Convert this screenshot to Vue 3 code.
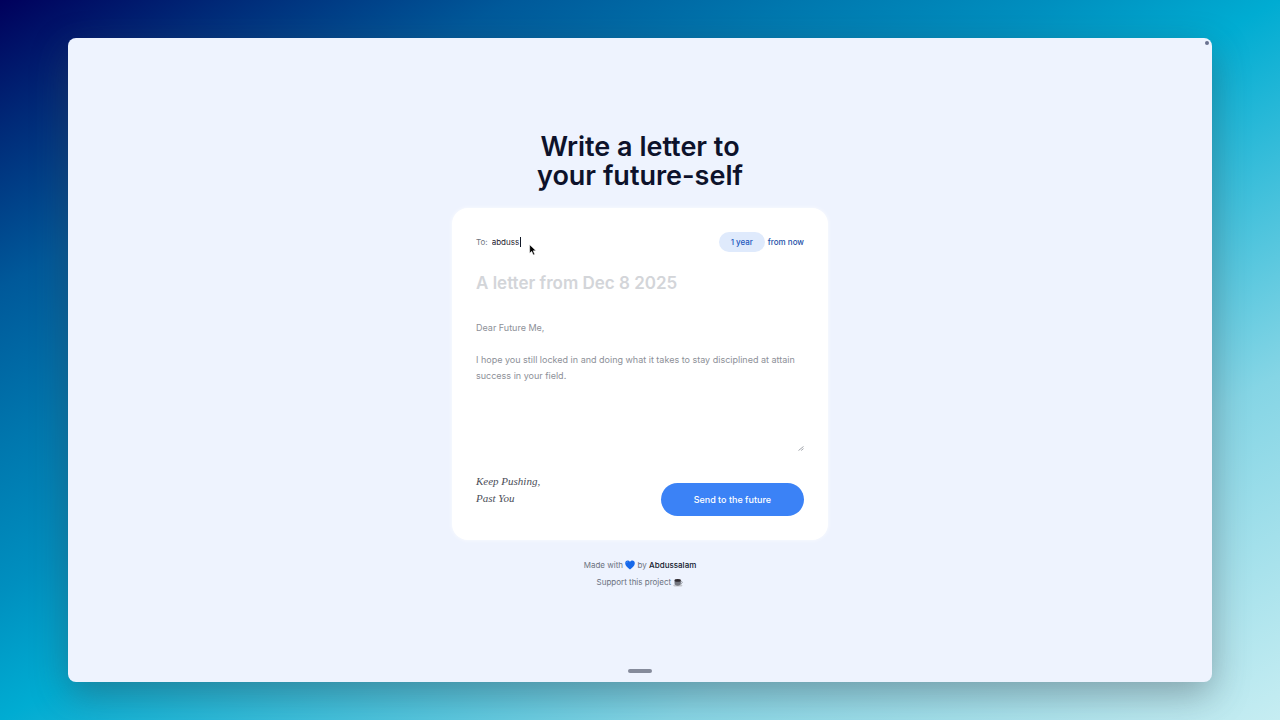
<script setup>
import { ref } from 'vue'

const periods = ['6 months', '1 year', '3 years', '5 years']

const to = ref('abduss')
const period = ref('1 year')
const title = ref('')
const message = ref('')
const sent = ref(false)

const hint = `Dear Future Me,

I hope you still locked in and doing what it takes to stay disciplined at attain success in your field.`

function send() {
  if (!to.value.trim()) return
  sent.value = true
}
</script>

<template>
  <div class="desktop">
    <div class="window">
      <span class="dot"></span>

      <main class="page">
        <h1 class="heading">Write a letter to<br />your future-self</h1>

        <form class="card" @submit.prevent="send">
          <div class="top-row">
            <div class="to-field">
              <label for="to">To:</label>
              <div class="to-box">
                <input id="to" v-model="to" type="text" class="to-input" autocomplete="off" spellcheck="false" />
                <span class="caret"></span>
                <svg class="pointer" viewBox="0 0 12 18" aria-hidden="true">
                  <path d="M1 1v13l3-3 2.400 5.400 2.200-1L6.300 10.200H10.500z" fill="#000" stroke="#fff" stroke-width="0.8" />
                </svg>
              </div>
            </div>
            <div class="when">
              <select id="period" v-model="period" class="period">
                <option v-for="p in periods" :key="p" :value="p">{{ p }}</option>
              </select>
              <label for="period">from now</label>
            </div>
          </div>

          <input
            v-model="title"
            type="text"
            class="title-input"
            placeholder="A letter from Dec 8 2025"
            aria-label="Title"
          />

          <div class="message-box">
            <textarea v-model="message" class="message" :placeholder="hint" aria-label="Message"></textarea>
            <svg class="grip" viewBox="0 0 6 6" aria-hidden="true">
              <path d="M0.500 5.500L5.500 1.500M3.200 5.500L5.500 3.600" stroke="#8b8f98" stroke-width="0.8" />
            </svg>
          </div>

          <div class="bottom-row">
            <p class="signature">Keep Pushing,<br />Past You</p>
            <button type="submit" class="send" :disabled="sent">Send to the future</button>
          </div>
        </form>

        <footer class="footer">
          <p>
            Made with
            <svg class="heart" viewBox="0 0 10 10" role="img" aria-label="love">
              <path d="M5 9.600C2.400 7.400 0.200 5.600 0.200 3.200 0.200 1.600 1.300 0.600 2.700 0.600 3.700 0.600 4.600 1.200 5 2 5.400 1.200 6.300 0.600 7.300 0.600 8.700 0.600 9.800 1.600 9.800 3.200 9.800 5.600 7.600 7.400 5 9.600z" fill="#1668ea" />
              <path d="M1.600 3.100C1.600 2.200 2.200 1.700 3 1.800" fill="none" stroke="#4d9bff" stroke-width="0.8" />
            </svg>
            by <a href="#" class="author">Abdussalam</a>
          </p>
          <a href="#" class="support">
            Support this project
            <svg class="cup" viewBox="0 0 10 9" aria-hidden="true">
              <ellipse cx="4.800" cy="7.400" rx="4.600" ry="1.200" fill="#c3c6cc" />
              <path d="M1.500 2.500h6.400v2.600c0 1.700-1.300 2.700-3.200 2.700S1.500 6.800 1.500 5.100z" fill="#747780" />
              <path d="M7.900 3.300c1.800-.2 1.800 2.500-.4 2.500" fill="none" stroke="#8b8e96" stroke-width="0.9" />
              <ellipse cx="4.700" cy="2.400" rx="3.200" ry="1.300" fill="#302b30" />
            </svg>
          </a>
        </footer>
      </main>

      <span class="home-bar"></span>
    </div>
  </div>
</template>

<style>
body {
  margin: 0;
}
</style>

<style scoped>
.desktop {
  box-sizing: border-box;
  display: flex;
  min-height: 100vh;
  padding: 38px 68px;
  font-family: Inter, 'Liberation Sans', sans-serif;
  background: linear-gradient(
    to bottom right,
    #00005c 0%,
    #002a78 9%,
    #00599a 20%,
    #0077ae 31%,
    #008fbf 41%,
    #00acd2 50%,
    #85d5e5 76%,
    #c6edf2 100%
  );
}

.window {
  position: relative;
  flex: 1;
  display: flex;
  justify-content: center;
  align-items: center;
  border-radius: 8px;
  background: #eef3fe;
  box-shadow: 0 12px 36px rgba(60, 60, 70, 0.4);
}

.dot {
  position: absolute;
  top: 3px;
  right: 3px;
  width: 4px;
  height: 4px;
  border-radius: 50%;
  background: #69728f;
}

.home-bar {
  position: absolute;
  bottom: 9px;
  width: 24px;
  height: 4px;
  border-radius: 2px;
  background: #858b9b;
}

.page {
  display: flex;
  flex-direction: column;
  align-items: center;
  width: 100%;
  padding-top: 2px;
}

.heading {
  margin: 0 0 18px;
  text-align: center;
  font-size: 27px;
  line-height: 29px;
  font-weight: 600;
  color: #0d122b;
}

.card {
  box-sizing: border-box;
  width: 100%;
  max-width: 376px;
  padding: 24px;
  border-radius: 16px;
  background: #fff;
  box-shadow: 0 0 4px rgba(255, 255, 255, 0.8);
}

input,
textarea,
select,
button {
  box-sizing: border-box;
  margin: 0;
  padding: 0;
  border: none;
  outline: none;
  background: transparent;
  font-family: inherit;
}

/* Recipient and delivery date */
.top-row {
  display: flex;
  justify-content: space-between;
  align-items: center;
  font-size: 8px;
}

.to-field {
  flex: 1;
  display: flex;
  align-items: center;
  gap: 4px;
  color: #70757f;
}

.to-box {
  position: relative;
  flex: 1;
}

.to-input {
  display: block;
  width: 100%;
  height: 20px;
  font-size: 8px;
  color: #1f2430;
}

.caret {
  position: absolute;
  top: 5px;
  left: 28px;
  width: 1px;
  height: 10px;
  background: #111827;
}

.pointer {
  position: absolute;
  top: 12px;
  left: 37px;
  width: 8px;
  height: 12px;
}

.when {
  display: flex;
  align-items: center;
  gap: 3px;
  font-weight: 500;
  color: #2450a8;
}

.period {
  appearance: none;
  width: 46px;
  height: 20px;
  border-radius: 10px;
  background: #dfeafc;
  text-align: center;
  text-align-last: center;
  font-size: 8px;
  font-weight: 500;
  color: #2458bd;
  cursor: pointer;
}

/* Letter */
.title-input {
  display: block;
  width: 100%;
  height: 28px;
  margin-top: 17px;
  font-size: 17px;
  font-weight: 600;
  color: #1f2430;
}

.title-input::placeholder {
  color: #d3d5d9;
  opacity: 1;
}

.message-box {
  position: relative;
  margin-top: 23px;
}

.message {
  display: block;
  width: 100%;
  height: 131px;
  resize: none;
  font-size: 9px;
  line-height: 16px;
  color: #1f2430;
}

.message::placeholder {
  color: #8d9098;
  opacity: 1;
}

.grip {
  position: absolute;
  right: 0;
  bottom: 0;
  width: 6px;
  height: 6px;
}

.bottom-row {
  display: flex;
  justify-content: space-between;
  align-items: flex-end;
  margin-top: 22px;
}

.signature {
  align-self: flex-start;
  margin: 0;
  font-family: 'Brush Script MT', 'Liberation Serif', cursive;
  font-size: 11px;
  font-style: italic;
  line-height: 17px;
  color: #4a4d57;
}

.send {
  height: 33px;
  margin-top: 10px;
  padding: 0 33px;
  border-radius: 17px;
  background: #3b82f6;
  color: #fff;
  font-size: 9px;
  font-weight: 500;
  cursor: pointer;
}

/* Footer */
.footer {
  display: flex;
  flex-direction: column;
  align-items: center;
  margin-top: 17px;
  font-size: 8px;
  line-height: 17px;
  color: #6b7280;
}

.footer p {
  margin: 0;
}

.footer a {
  color: inherit;
  text-decoration: none;
}

.footer .author {
  font-weight: 500;
  color: #10172b;
}

.heart {
  width: 10px;
  height: 10px;
  vertical-align: middle;
}

.cup {
  width: 10px;
  height: 9px;
  vertical-align: middle;
}
</style>
